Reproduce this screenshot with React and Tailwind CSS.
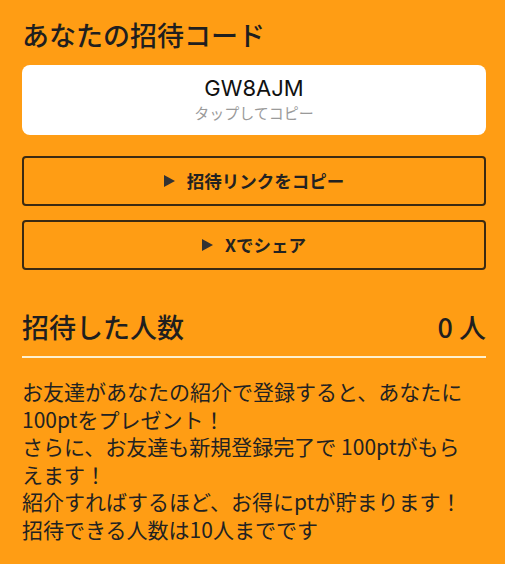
import React from "react";

const font = { fontFamily: '"Noto Sans CJK JP", "Noto Sans", sans-serif' };
const latin = { fontFamily: 'Inter, "Noto Sans CJK JP", sans-serif' };

function Tri() {
  return (
    <svg width="11" height="12" viewBox="0 0 11 12" className="shrink-0">
      <path d="M0 0 L11 6 L0 12 Z" fill="#333333" />
    </svg>
  );
}

function OutlineButton({ children }) {
  return (
    <button className="w-full h-[50px] rounded-[4px] border-2 border-[#3b2a12] flex items-center justify-center gap-[12px] text-[#222] text-[17.5px] font-semibold">
      <Tri />
      <span>{children}</span>
    </button>
  );
}

export default function App() {
  return (
    <div
      className="w-full min-h-[564px] bg-[#ff9d14] pl-[22px] pr-[19px] pt-[16px] pb-[20px] text-[#1f1f1f]"
      style={font}
    >
      <h1 className="text-[27px] leading-[38px] font-medium">あなたの招待コード</h1>

      <div className="mt-[11px] h-[70px] rounded-[8px] bg-white flex flex-col items-center justify-center">
        <div className="text-[22px] leading-[26px] text-[#111] -mt-[3px]" style={latin}>GW8AJM</div>
        <div className="text-[15px] leading-[20px] text-[#9a9a9a] mt-[2px]">タップしてコピー</div>
      </div>

      <div className="mt-[21px] flex flex-col gap-[14px]">
        <OutlineButton>招待リンクをコピー</OutlineButton>
        <OutlineButton>Xでシェア</OutlineButton>
      </div>

      <div className="mt-[38px] flex items-center justify-between pb-[10px] border-b-2 border-[#fff1cf]">
        <div className="text-[27px] leading-[38px] font-medium">招待した人数</div>
        <div className="text-[27px] leading-[38px] font-medium">0 人</div>
      </div>

      <p className="mt-[20px] text-[21px] leading-[27.5px] text-[#222] whitespace-nowrap">
        お友達があなたの紹介で登録すると、あなたに
        <br />
        100ptをプレゼント！
        <br />
        さらに、お友達も新規登録完了で 100ptがもら
        <br />
        えます！
        <br />
        紹介すればするほど、お得にptが貯まります！
        <br />
        招待できる人数は10人までです
      </p>
    </div>
  );
}
